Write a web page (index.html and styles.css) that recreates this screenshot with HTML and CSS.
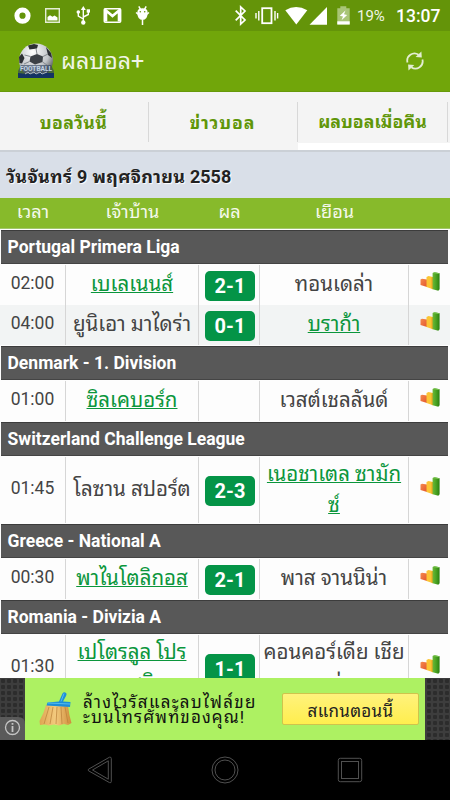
FILE: index.html
```html
<!DOCTYPE html>
<html lang="th">
  <head>
    <meta charset="UTF-8">
    <meta name="viewport" content="width=device-width, initial-scale=1.0">
    <title>ผลบอล+</title>
    <link rel="stylesheet" href="styles.css">
  </head>
  <body>

    <svg class="defs" width="0" height="0">
      <defs>
        <linearGradient id="red" x1="0" x2="1" y1="0" y2="1">
          <stop offset="0" stop-color="#f58a4c"/><stop offset="1" stop-color="#e2552f"/>
        </linearGradient>
        <linearGradient id="green" x1="0" x2="1">
          <stop offset="0" stop-color="#6cb83a"/><stop offset="0.5" stop-color="#4aa322"/><stop offset="1" stop-color="#2c7f10"/>
        </linearGradient>
        <radialGradient id="ball" cx="0.4" cy="0.25" r="0.8">
          <stop offset="0" stop-color="#ffffff"/><stop offset="0.6" stop-color="#c0c3c7"/><stop offset="1" stop-color="#3a3d40"/>
        </radialGradient>
        <linearGradient id="straw" x1="0" x2="1">
          <stop offset="0" stop-color="#dfa552"/><stop offset="0.5" stop-color="#f3ca7e"/><stop offset="1" stop-color="#cf8d3a"/>
        </linearGradient>
        <symbol id="stats" viewBox="0 0 20 19">
          <path d="M0.5 7.5L2 6.8L7 7.5V15L0.5 13Z" fill="url(#red)"/>
          <path d="M6.5 5L8.5 4L13 5V17.2L6.5 15Z" fill="#fbc534"/>
          <path d="M11.5 5.5L13 5V17.2L11.5 16.6Z" fill="#e9a51e"/>
          <path d="M12.6 1L14.6 0.2L19.6 1.2V17.3L18.3 18.8L12.6 17.2Z" fill="url(#green)"/>
          <path d="M12.6 1L14.6 0.2L19.6 1.2L18.2 2Z" fill="#7cc653"/>
        </symbol>
      </defs>
    </svg>

    <header class="statusBar">
      <div class="statusLeft">
        <svg width="150" height="31" viewBox="0 0 150 31" fill="none">
          <circle cx="22.5" cy="15.7" r="5.6" stroke="#fff" stroke-width="5"/>
          <path d="M45.7 8.7H59.3V22.3H45.7Z" stroke="#e4edd5" stroke-width="1.4"/>
          <path d="M47.5 20.5V17L50 15.2L52.5 16.8L54.5 15.6L57.5 17.5V20.5Z" fill="#fff"/>
          <path d="M83.3 9V22M83.3 19L78.3 16V12M83.3 17L88.3 14.5V11" stroke="#fff" stroke-width="1.4"/>
          <path d="M83.3 6L85.8 10H80.8Z" fill="#fff"/>
          <circle cx="83.3" cy="22.5" r="2.2" fill="#fff"/>
          <circle cx="78.3" cy="12" r="1.8" fill="#fff"/>
          <path d="M86.7 9.3H90V12.6H86.7Z" fill="#fff"/>
          <rect x="104.3" y="8.8" width="16.3" height="13.4" rx="1" stroke="#fff" stroke-width="1.6"/>
          <path d="M106 21.5V10.5L112.5 16L119 10.5V21.5" stroke="#fff" stroke-width="2.6"/>
          <path d="M137.3 12.5Q137.5 8.3 142.5 8.3Q147.5 8.3 147.7 12.5Q147.5 20 142.5 20Q137.5 20 137.3 12.5Z" fill="#fff"/>
          <path d="M138.8 6.3L140.5 9.3M146.2 6.3L144.5 9.3M142.5 20V25" stroke="#fff" stroke-width="1.5"/>
          <path d="M136 12.5L139 15M149 12.5L146 15" stroke="#fff" stroke-width="1.3"/>
          <circle cx="140.3" cy="11.8" r="0.8" fill="#649409"/>
          <circle cx="144.7" cy="11.8" r="0.8" fill="#649409"/>
        </svg>
      </div>
      <div class="statusRight">
        <svg width="122" height="31" viewBox="230 0 122 31" fill="none">
          <path d="M235.7 10.7L245 20L240.7 24V7L245 11L235.7 20.3" stroke="#fff" stroke-width="1.7"/>
          <rect x="262.2" y="8.2" width="9.3" height="15" stroke="#fff" stroke-width="1.8"/>
          <path d="M258.8 11V20.5M256 13V18.5M275 11V20.5M277.6 13V18.5" stroke="#fff" stroke-width="1.4"/>
          <path d="M285.3 10.3Q296 3.5 307.3 10.3L296.3 24.5Z" fill="#fff"/>
          <path d="M309.5 24.7L327 7V24.7Z" fill="#fff"/>
          <path d="M337.3 8.3H340.3V6.3H346.3V8.3H349.7V24.5H337.3Z" fill="#a9c577"/>
          <path d="M337.3 21.3H349.7V24.5H337.3Z" fill="#fff"/>
          <path d="M345.5 10.5L339.8 15.8L343 16.5L341.5 20.3L347.2 15L344 14.3Z" fill="#fff"/>
        </svg>
        <span class="battery">19%</span>
        <span class="clock">13:07</span>
      </div>
    </header>

    <section class="appBar">
      <svg class="logo" width="36" height="36" viewBox="0 0 36 36">
        <circle cx="18" cy="17.5" r="17" fill="url(#ball)"/>
        <path d="M12.5 13.5L19 11L25 13.5L24.5 19L17 21.5L11.5 18.5Z" fill="#3c4147"/>
        <path d="M10 2.5L16 1L20 2L19 5.5L11.5 6.5ZM28 4L33 10L34 15L30 12ZM1 14L4 10.5L6.5 15L4 20.5L1.5 20Z" fill="#2c2f33"/>
        <path d="M19 11L18 5.5M25 13.5L30 11M12.5 13.5L6.5 12M11.5 18.5L6 21M24.5 19L29 22" stroke="#83888d" fill="none"/>
        <path d="M0 28L3 22L33 22L36 28V35H0Z" fill="#2b405c" opacity="0.6"/>
        <path d="M0 30L9 31L28 30L36 30V35H0Z" fill="#143363"/>
        <text x="18" y="28" class="logoText" textLength="32" lengthAdjust="spacingAndGlyphs">FOOTBALL</text>
        <path d="M7 31L10 29L12 31L16 29L18 31L22 29L24 31L29 29" stroke="#aab6c2" fill="none"/>
      </svg>
      <h1>ผลบอล+</h1>
      <svg class="refresh" width="18" height="20" viewBox="0 0 18 20">
        <path d="M1.5 11.5A7.2 7.2 0 0 1 12.6 3.8M16.4 8.5A7.2 7.2 0 0 1 5.3 16.2" fill="none" stroke="#e3edd2" stroke-width="1.8"/>
        <path d="M9.6 6L15.8 6.6L15.4 0.6ZM8.3 14L2.1 13.4L2.5 19.4Z" fill="#e3edd2"/>
      </svg>
    </section>

    <nav class="tabs">
      <a class="tab"><span class="tabOne">บอลวันนี้</span></a>
      <a class="tab"><span class="tabTwo">ข่าวบอล</span></a>
      <a class="tab tabActive"><span class="tabThree">ผลบอลเมื่อคืน</span></a>
    </nav>

    <h2 class="date"><span>วันจันทร์ 9 พฤศจิกายน</span> 2558</h2>

    <div class="row tableHead">
      <div>เวลา</div>
      <div>เจ้าบ้าน</div>
      <div>ผล</div>
      <div>เยือน</div>
      <div></div>
    </div>

    <main class="results">
      <h3>Portugal Primera Liga</h3>
      <div class="row match">
        <div class="time">02:00</div>
        <div class="team winner"><span>เบเลเนนส์</span></div>
        <div class="cell"><b class="score">2-1</b></div>
        <div class="team"><span>ทอนเดล่า</span></div>
        <div class="cell"><svg class="stats"><use href="#stats"/></svg></div>
      </div>
      <div class="row match odd">
        <div class="time">04:00</div>
        <div class="team"><span>ยูนิเอา มาไดร่า</span></div>
        <div class="cell"><b class="score">0-1</b></div>
        <div class="team winner"><span>บราก้า</span></div>
        <div class="cell"><svg class="stats"><use href="#stats"/></svg></div>
      </div>

      <h3>Denmark - 1. Division</h3>
      <div class="row match">
        <div class="time">01:00</div>
        <div class="team winner"><span>ซิลเคบอร์ก</span></div>
        <div class="cell"></div>
        <div class="team"><span>เวสต์เชลลันด์</span></div>
        <div class="cell"><svg class="stats"><use href="#stats"/></svg></div>
      </div>

      <h3>Switzerland Challenge League</h3>
      <div class="row match tall">
        <div class="time">01:45</div>
        <div class="team"><span>โลซาน สปอร์ต</span></div>
        <div class="cell"><b class="score">2-3</b></div>
        <div class="team winner"><span>เนอชาเตล ซามัก<br>ซ์</span></div>
        <div class="cell"><svg class="stats"><use href="#stats"/></svg></div>
      </div>

      <h3>Greece - National A</h3>
      <div class="row match">
        <div class="time">00:30</div>
        <div class="team winner"><span>พาไนโตลิกอส</span></div>
        <div class="cell"><b class="score">2-1</b></div>
        <div class="team"><span>พาส จานนิน่า</span></div>
        <div class="cell"><svg class="stats"><use href="#stats"/></svg></div>
      </div>

      <h3>Romania - Divizia A</h3>
      <div class="row match tall">
        <div class="time">01:30</div>
        <div class="team winner"><span>เปโตรลูล โปร<br>เยสติ</span></div>
        <div class="cell"><b class="score">1-1</b></div>
        <div class="team"><span>คอนคอร์เดีย เชีย<br>จน่า</span></div>
        <div class="cell"><svg class="stats"><use href="#stats"/></svg></div>
      </div>
    </main>

    <aside class="adBar">
      <div class="adInfo">
        <svg width="25" height="23" viewBox="0 0 25 23" fill="none">
          <path d="M0 0H18Q25 0 25 7V23H0Z" fill="#5a5a5a"/>
          <circle cx="12.5" cy="10.5" r="7" stroke="#c4c4c4" stroke-width="1.3"/>
          <path d="M12.5 9V15M12.5 6V7.7" stroke="#c4c4c4" stroke-width="1.8"/>
        </svg>
      </div>
      <div class="ad">
        <svg class="broom" width="33" height="34" viewBox="0 0 33 34">
          <path d="M7 13L29 14Q30 23 32.5 31L29 33L25 32L20 33.5L15 32.5L10 33.5L6 32.5L1 33L0.5 29Q5 21 7 13Z" fill="url(#straw)"/>
          <path d="M10 15L5 32M14 15L11 32M18 15L17 32M22 15L23 32M26 15L29 31" stroke="#b9803a" stroke-width="0.7" fill="none"/>
          <path d="M8.5 10.5L20 9.5L23.5 1.5Q25 -0.5 27 1Q28 2 27 4L24 9.5L31.5 10L31 15L7.5 13.5Z" fill="#1c8fd8"/>
          <path d="M9 11L31 12M25 1.5L22 9.5" stroke="#5cc0f2" stroke-width="0.9" fill="none"/>
        </svg>
        <p class="adText"><span class="adLineOne">ล้างไวรัสและลบไฟล์ขย</span><br><span class="adLineTwo">ะบนโทรศัพท์ของคุณ!</span></p>
        <button class="adButton">สแกนตอนนี้</button>
      </div>
      <div class="adEdge"></div>
    </aside>

    <footer class="navBar">
      <svg width="450" height="60" viewBox="0 0 450 60" fill="none" stroke="#505050" stroke-width="1">
        <path d="M88.5 29.2L109.5 17.2Q111.3 16.8 111.3 18.5V41.5Q111.3 43.2 109.5 42.6L88.5 30.8Q87.8 30 88.5 29.2Z"/>
        <path d="M92.5 30L108.3 20.8V39.2Z"/>
        <circle cx="225" cy="30" r="13"/>
        <circle cx="225" cy="30" r="10"/>
        <rect x="338.3" y="18.3" width="23.4" height="23.4" rx="2"/>
        <rect x="341.5" y="21.5" width="17" height="17"/>
      </svg>
    </footer>

  </body>
</html>
```

FILE: styles.css
```css
* {
  box-sizing: border-box;
}

body {
  margin: 0;
  width: 450px;
  height: 800px;
  overflow: hidden;
  display: flex;
  flex-direction: column;
  font-family: Roboto, "Noto Sans Thai Looped", Loma, Waree, "Noto Sans", sans-serif;
  background-color: #fdfdfd;
}

h1, h2, h3, p {
  margin: 0;
}

.defs {
  position: absolute;
}

.statusBar {
  height: 31px;
  flex: none;
  display: flex;
  justify-content: space-between;
  background-color: #649409;
  color: white;
}

.statusRight {
  display: flex;
  align-items: center;
  width: 220px;
}

.battery {
  font-size: 15px;
  margin-left: 5px;
  width: 39px;
  color: #f0f5e6;
}

.clock {
  font-size: 17.5px;
  font-weight: 500;
  white-space: nowrap;
}

.appBar {
  height: 60px;
  flex: none;
  display: flex;
  align-items: center;
  padding: 0px 26px 0px 18px;
  background-color: #71a60a;
}

.logoText {
  font-size: 8px;
  font-weight: bold;
  fill: #c5d6e6;
  text-anchor: middle;
}

.appBar h1 {
  font-size: 23.2px;
  font-weight: normal;
  line-height: 60px;
  color: #f0f5e6;
  margin-left: 7px;
  flex: 1;
}

.tabs {
  height: 61px;
  flex: none;
  display: grid;
  grid-template-columns: 149px 149px 152px;
  background-color: #f4f4f4;
  border-top: 1px solid #67990a;
  border-bottom: 2px solid #cbd0d6;
}

.tab {
  display: flex;
  align-items: center;
  justify-content: center;
  padding-right: 2px;
  padding-bottom: 1px;
  font-size: 17.7px;
  font-weight: bold;
  color: #5f9608;
  background: linear-gradient(#d8d8d8, #d8d8d8) right 10px / 1px 40px no-repeat;
  white-space: nowrap;
}

.tabOne {
  letter-spacing: 0.4px;
}

.tabTwo {
  letter-spacing: 0.9px;
}

.tabActive {
  background-position: 149px 10px;
  border-bottom: 7px solid white;
  padding-top: 6px;
  padding-right: 3px;
}

.date {
  height: 46px;
  flex: none;
  padding-left: 6px;
  font-size: 18px;
  line-height: 49px;
  color: #222;
  background-color: #d9dfe8;
  text-shadow: 1px 1px 1px white;
  white-space: nowrap;
}

.date span {
  letter-spacing: 0.35px;
}

.row {
  display: grid;
  grid-template-columns: 66px 133px 61px 149px 41px;
}

.tableHead {
  height: 31px;
  flex: none;
  line-height: 28px;
  font-size: 18.2px;
  text-align: center;
  color: #f5f9ec;
  background-color: #87ba2b;
  border-bottom: 1px solid #a2c76a;
}

.results {
  height: 449px;
  flex: none;
  overflow: hidden;
  color: #444;
}

.results h3 {
  height: 34px;
  margin: 1px 2px 1px 1px;
  padding-left: 6.5px;
  font-size: 17.5px;
  line-height: 32px;
  color: white;
  background-color: #585858;
  border-top: 1px solid #3c3c3c;
  border-bottom: 1px solid #444;
}

.match {
  height: 40px;
}

.tall {
  height: 66px;
}

.odd {
  background-color: #f2f4f4;
}

.match > div {
  display: flex;
  align-items: center;
  justify-content: center;
  border-right: 1px solid #d6d6d6;
}

.match > div:last-child {
  border-right: none;
}

.match .time {
  font-size: 17.5px;
  padding-bottom: 4px;
}

.match .team {
  padding-bottom: 1px;
  font-size: 20.5px;
  line-height: 31px;
  text-align: center;
  white-space: nowrap;
}

.winner {
  color: #0b963c;
  text-decoration: underline;
  text-decoration-thickness: 1px;
}

.score {
  width: 50px;
  height: 30px;
  margin: 2px 0px 0px 2px;
  border-radius: 5px;
  font-size: 20px;
  line-height: 31px;
  text-align: center;
  color: white;
  background-color: #049447;
}

.stats {
  width: 20px;
  height: 19px;
  margin: 0px 0px 8px 1px;
}

.adBar {
  height: 62px;
  flex: none;
  display: flex;
  background: radial-gradient(circle at 3px 3px, #2c2c2c 2px, transparent 2.5px) 0 0 / 6px 6px, #3d3d3d;
}

.adInfo {
  width: 25px;
  display: flex;
  align-items: flex-end;
}

.ad {
  width: 400px;
  display: flex;
  align-items: center;
  background-color: #adf162;
}

.broom {
  margin-left: 14px;
}

.adText {
  width: 188px;
  margin-left: 11px;
  padding-top: 2px;
  font-size: 17px;
  line-height: 15px;
  color: #111;
  white-space: nowrap;
}

.adLineOne {
  letter-spacing: 1.25px;
}

.adLineTwo {
  letter-spacing: 1.1px;
}

.adButton {
  width: 137px;
  height: 32px;
  margin-left: 11px;
  padding: 1px 0px 0px;
  font-family: inherit;
  font-size: 17px;
  letter-spacing: 0.3px;
  color: #222;
  background: linear-gradient(#fff27c, #ffee4e);
  border: 1px solid #cfc44c;
  border-radius: 2px;
}

.navBar {
  height: 60px;
  flex: none;
  background-color: black;
}
```
